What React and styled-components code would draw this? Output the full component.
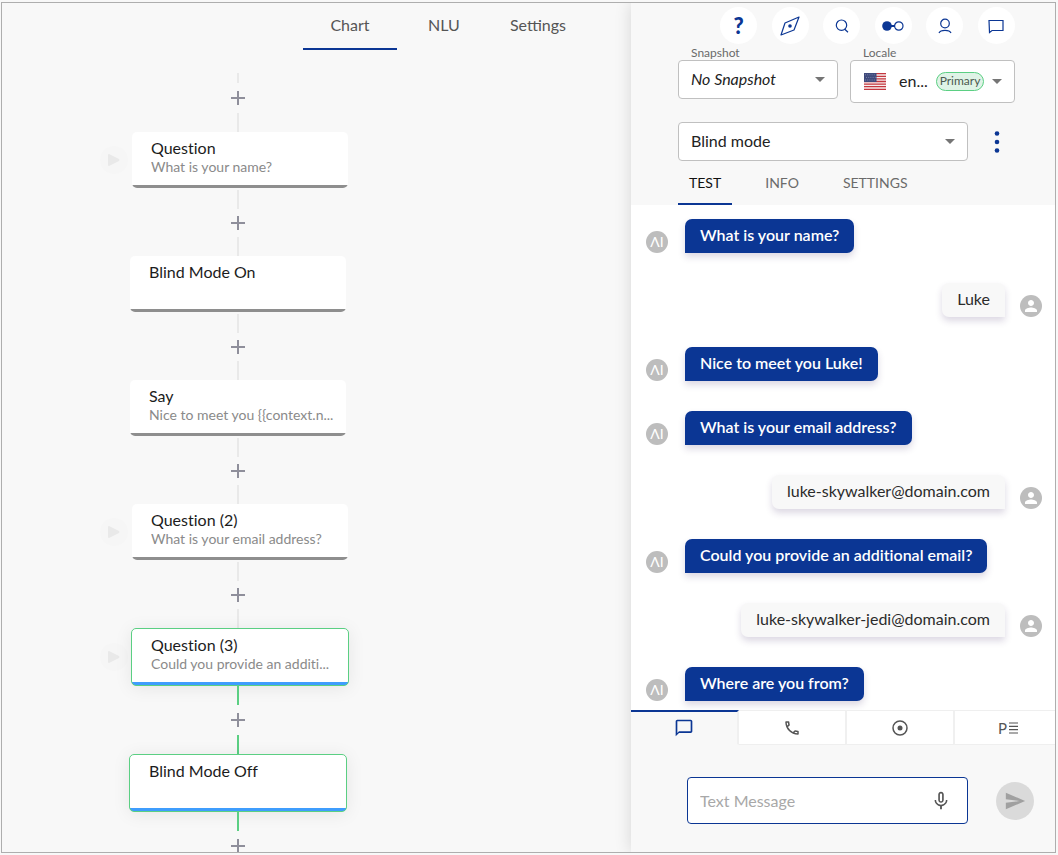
import React from "react";
import styled, { createGlobalStyle } from "styled-components";
import {
  MdChatBubbleOutline,
  MdMicNone,
  MdOutlinePhone,
  MdPerson,
  MdSend,
} from "react-icons/md";

const blue = "#0b3694";
const green = "#5bcf83";

const GlobalStyle = createGlobalStyle`
  * {
    box-sizing: border-box;
  }
  body {
    margin: 0;
    background: #f8f8f8;
    font-family: Lato, "Liberation Sans", sans-serif;
    font-variant-ligatures: none;
    color: #222;
  }
  button, input, select {
    font-family: inherit;
    color: inherit;
  }
  button {
    border: none;
    background: none;
    padding: 0;
    cursor: pointer;
  }
`;

const Page = styled.div`
  height: 100vh;
  padding: 2px 2px 2px 1px;
`;

const Frame = styled.div`
  height: 100%;
  display: grid;
  grid-template-columns: minmax(0, 1fr) 424px;
  border: 1px solid #aeaeae;
  overflow: hidden;
`;

/* ---------- chart ---------- */

const ChartPane = styled.main`
  min-height: 0;
  overflow: hidden;
`;

const TopTabs = styled.nav`
  display: flex;
  justify-content: flex-end;
  padding-right: 46px;
`;

const TopTab = styled.button`
  width: 94px;
  height: 47px;
  padding-bottom: 2px;
  font-size: 16px;
  line-height: 20px;
  color: #555;
  border-bottom: 2px solid ${(props) => (props.$active ? blue : "transparent")};
`;

const Flow = styled.div`
  width: 284px;
  margin-left: 94px;
  padding-top: 23px;
`;

const Connector = styled.div`
  height: ${(props) => (props.$first ? 59 : 68)}px;
  padding-top: ${(props) => (props.$first || props.$active ? 0 : 2)}px;
  display: flex;
  flex-direction: column;
  align-items: center;
`;

const Line = styled.span`
  width: 2px;
  height: ${(props) => (props.$short ? 10 : 19)}px;
  background: ${(props) => (props.$active ? green : "#e9e9e9")};
`;

const AddButton = styled.button`
  flex: 1;
  display: flex;
  align-items: center;
`;

const Row = styled.div`
  display: grid;
  grid-template-columns: ${(props) => (props.$playable ? 36 : 34)}px 216px;
  align-items: center;
`;

const PlayButton = styled.button`
  grid-column: 1;
  width: 28px;
  height: 28px;
  margin-left: 4px;
  border-radius: 50%;
  background: #f6f6f6;
  display: flex;
  align-items: center;
  justify-content: center;
`;

const Card = styled.article`
  grid-column: 2;
  height: ${(props) => (props.$active ? 58 : 56)}px;
  margin: 0 ${(props) => (props.$active ? -1 : 0)}px;
  padding: 7px 8px 0 19px;
  border-radius: 5px;
  border: ${(props) => (props.$active ? `1px solid ${green}` : "none")};
  background: linear-gradient(
    to top,
    ${(props) => (props.$active ? "#3f9dfd" : "#8e8e8e")} 3px,
    #fff 3px
  );
  box-shadow: ${(props) => (props.$active ? "0 2px 18px rgba(0, 0, 0, 0.08)" : "none")};
`;

const CardTitle = styled.h2`
  margin: 0;
  font-size: 16px;
  line-height: 18px;
  font-weight: 400;
  color: #1c1c1c;
`;

const CardText = styled.p`
  margin: 0;
  font-size: 14px;
  line-height: 19px;
  color: #8a8a8a;
  white-space: nowrap;
  overflow: hidden;
`;

/* ---------- side panel ---------- */

const Side = styled.aside`
  min-height: 0;
  display: flex;
  flex-direction: column;
  background: #f8f8f8;
  box-shadow: 0 0 16px rgba(0, 0, 0, 0.14);
`;

const SideHeader = styled.header`
  padding: 4px 40px 0 47px;
`;

const IconBar = styled.div`
  display: flex;
  justify-content: space-between;
  margin-left: 42px;
`;

const RoundButton = styled.button`
  width: 37px;
  height: 37px;
  border-radius: 50%;
  background: #fff;
  display: flex;
  align-items: center;
  justify-content: center;
  color: ${blue};
  font-size: 22px;
  font-weight: 900;
`;

const Fields = styled.div`
  display: grid;
  grid-template-columns: 1fr 1fr;
  gap: 12px;
  align-items: start;
  margin-top: 2px;
`;

const FieldLabel = styled.label`
  display: block;
  padding-left: 13px;
  font-size: 12px;
  line-height: 14px;
  color: #6a6a6a;
`;

const SelectBox = styled.div`
  flex: 1;
  height: ${(props) => (props.$tall ? 43 : 39)}px;
  padding: 0 12px;
  display: flex;
  align-items: center;
  gap: 8px;
  background: #fff;
  border: 1px solid #c0c0c0;
  border-radius: 4px;
`;

const Select = styled.select`
  flex: 1;
  min-width: 0;
  height: 100%;
  padding: 0 0 2px;
  appearance: none;
  border: none;
  outline: none;
  background: none;
  font-size: 16px;
  font-style: ${(props) => (props.$italic ? "italic" : "normal")};
`;

const Flag = styled.svg`
  margin: 0 5px 0 1px;
`;

const Chip = styled.span`
  width: 48px;
  height: 19px;
  border: 1px solid ${green};
  border-radius: 10px;
  background: #dff3e6;
  color: #4c5a50;
  font-size: 12px;
  line-height: 16px;
  text-align: center;
`;

const BotRow = styled.div`
  display: flex;
  align-items: center;
  gap: 10px;
  margin-top: 19px;
`;

const MoreButton = styled.button`
  width: 37px;
  height: 37px;
  display: flex;
  align-items: center;
  justify-content: center;
`;

const SideTabs = styled.div`
  display: flex;
  gap: 22px;
  height: 44px;
`;

const SideTab = styled.button`
  padding: 0 11px;
  font-size: 14px;
  color: ${(props) => (props.$active ? "#111" : "#6b6b6b")};
  border-bottom: 2px solid ${(props) => (props.$active ? blue : "transparent")};
`;

const Chat = styled.section`
  flex: 1;
  min-height: 0;
  overflow: hidden;
  display: flex;
  flex-direction: column;
  gap: 30px;
  padding: 14px 13px 0 15px;
  background: #fff;
`;

const Message = styled.div`
  display: flex;
  flex-direction: ${(props) => (props.$user ? "row-reverse" : "row")};
  align-items: flex-end;
  gap: ${(props) => (props.$user ? 15 : 17)}px;
`;

const Avatar = styled.span`
  width: 22px;
  height: 22px;
  border-radius: 50%;
  background: #bdbdbd;
  color: #fff;
  font-size: 14px;
  line-height: 22px;
  display: flex;
  align-items: center;
  justify-content: center;
`;

const Bubble = styled.p`
  margin: 0;
  padding: 6px 15px 8px;
  font-size: 16px;
  line-height: 20px;
  font-weight: ${(props) => (props.$user ? 400 : 600)};
  color: ${(props) => (props.$user ? "#2b2b2b" : "#fff")};
  background: ${(props) => (props.$user ? "#f8f8f8" : blue)};
  border-radius: ${(props) => (props.$user ? "7px 7px 0 7px" : "7px 7px 7px 0")};
  box-shadow: 0 4px 7px rgba(60, 40, 100, 0.18);
`;

const ModeTabs = styled.div`
  display: flex;
  height: 35px;
  overflow: hidden;
`;

const ModeTab = styled.button`
  flex: 0 0 108px;
  display: flex;
  align-items: center;
  justify-content: center;
  gap: 2px;
  font-size: 15px;
  color: ${(props) => (props.$active ? blue : "#555")};
  background: ${(props) => (props.$active ? "#f8f8f8" : "#fff")};
  border-top: ${(props) => (props.$active ? `2px solid ${blue}` : "1px solid #efefef")};
  border-right: 2px solid #f0f0f0;
  border-bottom: 1px solid ${(props) => (props.$active ? "#f8f8f8" : "#efefef")};
`;

const Composer = styled.form`
  display: flex;
  align-items: center;
  gap: 28px;
  padding: 32px 21px 28px 56px;
`;

const InputBox = styled.div`
  flex: 1;
  height: 47px;
  display: flex;
  align-items: center;
  padding: 0 15px 0 12px;
  background: #fff;
  border: 1px solid ${blue};
  border-radius: 4px;
`;

const MessageInput = styled.input`
  flex: 1;
  min-width: 0;
  padding: 0 0 1px;
  border: none;
  outline: none;
  background: none;
  font-size: 16px;
  &::placeholder {
    color: #a8a8a8;
  }
`;

const MicButton = styled.button`
  display: flex;
  color: #555;
`;

const SendButton = styled.button`
  width: 38px;
  height: 38px;
  border-radius: 50%;
  background: #dadada;
  color: #a0a0a0;
  display: flex;
  align-items: center;
  justify-content: center;
`;

/* ---------- drawings ---------- */

const Caret = () => (
  <svg width="10" height="5" viewBox="0 0 10 5" aria-hidden="true">
    <path d="M0 0h10L5 5z" fill="#757575" />
  </svg>
);

const Plus = () => (
  <svg width="14" height="14" viewBox="0 0 14 14" aria-hidden="true">
    <path d="M7 0v14M0 7h14" stroke="#8f8f9b" strokeWidth="2" />
  </svg>
);

const Play = () => (
  <svg width="12" height="12" viewBox="0 0 12 12" aria-hidden="true">
    <path d="M0 1Q0 0 1 0L11 5Q12 6 11 7L1 12Q0 12 0 11z" fill="#e9e9e9" />
  </svg>
);

const CompassIcon = () => (
  <svg width="20" height="20" viewBox="0 0 20 20" fill="none" stroke={blue} aria-hidden="true">
    <path d="M19 1L5 7L1 19L14 14z" strokeWidth="1.2" strokeLinejoin="round" />
    <circle cx="10" cy="10" r="1.800" fill={blue} stroke="none" />
  </svg>
);

const SearchIcon = () => (
  <svg width="14" height="14" viewBox="0 0 14 14" fill="none" stroke={blue} aria-hidden="true">
    <circle cx="6.500" cy="6.200" r="5.200" strokeWidth="1.200" />
    <path d="M9.500 10L13 13.200" strokeWidth="1.200" />
  </svg>
);

const LinkIcon = () => (
  <svg width="22" height="12" viewBox="0 0 22 12" fill="none" stroke={blue} aria-hidden="true">
    <circle cx="5" cy="6" r="4.800" fill={blue} stroke="none" />
    <path d="M9 6h4" strokeWidth="2" />
    <circle cx="16.800" cy="6" r="4.200" strokeWidth="1.200" />
  </svg>
);

const UserIcon = () => (
  <svg width="14" height="16" viewBox="0 0 14 16" fill="none" stroke={blue} aria-hidden="true">
    <circle cx="7" cy="5.500" r="4.300" strokeWidth="1.200" />
    <path d="M1 15C2.500 11.500 11.500 11.500 13 15" strokeWidth="1.200" />
  </svg>
);

const MessageIcon = () => (
  <svg width="16" height="16" viewBox="0 0 16 16" fill="none" stroke={blue} aria-hidden="true">
    <path d="M1 2.500h14v10H4L1.500 14.500z" strokeWidth="1.200" />
  </svg>
);

const MoreIcon = () => (
  <svg width="6" height="22" viewBox="0 0 6 22" fill={blue} aria-hidden="true">
    <circle cx="3" cy="2.500" r="2.300" />
    <circle cx="3" cy="11" r="2.300" />
    <circle cx="3" cy="19.500" r="2.300" />
  </svg>
);

const UsFlag = () => (
  <Flag width="22" height="17" viewBox="0 0 22 17" aria-hidden="true">
    <rect width="22" height="17" fill="#f6eeee" />
    <path
      d="M0 .7h22M0 3.300h22M0 5.900h22M0 8.500h22M0 11.100h22M0 13.700h22M0 16.300h22"
      stroke="#c4373f"
      strokeWidth="1.300"
    />
    <rect width="12.500" height="9" fill="#3f4a7c" />
    <path
      d="M1 1.800h11M2 4.400h10M1 7h11"
      stroke="#8087ad"
      strokeWidth=".9"
      strokeDasharray="1 1.200"
    />
  </Flag>
);

const RecordIcon = () => (
  <svg width="16" height="16" viewBox="0 0 16 16" aria-hidden="true">
    <circle cx="8" cy="8" r="7" fill="none" stroke="#555" strokeWidth="1.500" />
    <circle cx="8" cy="8" r="2.500" fill="#555" />
  </svg>
);

const LinesIcon = () => (
  <svg width="9" height="12" viewBox="0 0 9 12" aria-hidden="true">
    <path d="M0 1h9M0 4.300h9M0 7.600h9M0 11h9" stroke="#555" strokeWidth="1.200" />
  </svg>
);

const nodes = [
  { title: "Question", text: "What is your name?", playable: true },
  { title: "Blind Mode On" },
  { title: "Say", text: "Nice to meet you {{context.n..." },
  { title: "Question (2)", text: "What is your email address?", playable: true },
  { title: "Question (3)", text: "Could you provide an additi...", playable: true, active: true },
  { title: "Blind Mode Off", active: true },
];

const messages = [
  { text: "What is your name?" },
  { text: "Luke", user: true },
  { text: "Nice to meet you Luke!" },
  { text: "What is your email address?" },
  { text: "luke-skywalker@domain.com", user: true },
  { text: "Could you provide an additional email?" },
  { text: "luke-skywalker-jedi@domain.com", user: true },
  { text: "Where are you from?" },
];

const FlowNode = ({ title, text, playable, active }) => (
  <>
    <Row $playable={playable}>
      {playable && (
        <PlayButton aria-label={`Play from ${title}`}>
          <Play />
        </PlayButton>
      )}
      <Card $active={active}>
        <CardTitle>{title}</CardTitle>
        {text && <CardText>{text}</CardText>}
      </Card>
    </Row>
    <Connector $active={active}>
      <Line $active={active} />
      <AddButton aria-label="Add node">
        <Plus />
      </AddButton>
      <Line $active={active} />
    </Connector>
  </>
);

const ChatMessage = ({ text, user }) => (
  <Message $user={user}>
    <Avatar>{user ? <MdPerson size={18} /> : "ΛI"}</Avatar>
    <Bubble $user={user}>{text}</Bubble>
  </Message>
);

const App = () => {
  return (
    <Page>
      <GlobalStyle />
      <Frame>
        <ChartPane>
          <TopTabs>
            <TopTab $active>Chart</TopTab>
            <TopTab>NLU</TopTab>
            <TopTab>Settings</TopTab>
          </TopTabs>
          <Flow>
            <Connector $first>
              <Line $short />
              <AddButton aria-label="Add node">
                <Plus />
              </AddButton>
              <Line />
            </Connector>
            {nodes.map((node) => (
              <FlowNode key={node.title} {...node} />
            ))}
          </Flow>
        </ChartPane>

        <Side>
          <SideHeader>
            <IconBar>
              <RoundButton>?</RoundButton>
              <RoundButton aria-label="Explore"><CompassIcon /></RoundButton>
              <RoundButton aria-label="Search"><SearchIcon /></RoundButton>
              <RoundButton aria-label="Connections"><LinkIcon /></RoundButton>
              <RoundButton aria-label="Profile"><UserIcon /></RoundButton>
              <RoundButton aria-label="Messages"><MessageIcon /></RoundButton>
            </IconBar>
            <Fields>
              <div>
                <FieldLabel htmlFor="snapshot">Snapshot</FieldLabel>
                <SelectBox>
                  <Select id="snapshot" $italic>
                    <option>No Snapshot</option>
                  </Select>
                  <Caret />
                </SelectBox>
              </div>
              <div>
                <FieldLabel htmlFor="locale">Locale</FieldLabel>
                <SelectBox $tall>
                  <UsFlag />
                  <Select id="locale">
                    <option>en...</option>
                  </Select>
                  <Chip>Primary</Chip>
                  <Caret />
                </SelectBox>
              </div>
            </Fields>
            <BotRow>
              <SelectBox>
                <Select aria-label="Flow">
                  <option>Blind mode</option>
                </Select>
                <Caret />
              </SelectBox>
              <MoreButton aria-label="More"><MoreIcon /></MoreButton>
            </BotRow>
            <SideTabs>
              <SideTab $active>TEST</SideTab>
              <SideTab>INFO</SideTab>
              <SideTab>SETTINGS</SideTab>
            </SideTabs>
          </SideHeader>

          <Chat>
            {messages.map((message) => (
              <ChatMessage key={message.text} {...message} />
            ))}
          </Chat>

          <ModeTabs>
            <ModeTab $active aria-label="Chat"><MdChatBubbleOutline size={20} /></ModeTab>
            <ModeTab aria-label="Phone"><MdOutlinePhone size={18} /></ModeTab>
            <ModeTab aria-label="Record"><RecordIcon /></ModeTab>
            <ModeTab>P<LinesIcon /></ModeTab>
          </ModeTabs>

          <Composer onSubmit={(e) => e.preventDefault()}>
            <InputBox>
              <MessageInput aria-label="Text Message" placeholder="Text Message" />
              <MicButton type="button" aria-label="Record voice"><MdMicNone size={22} /></MicButton>
            </InputBox>
            <SendButton aria-label="Send"><MdSend size={22} /></SendButton>
          </Composer>
        </Side>
      </Frame>
    </Page>
  );
};

export default App;
